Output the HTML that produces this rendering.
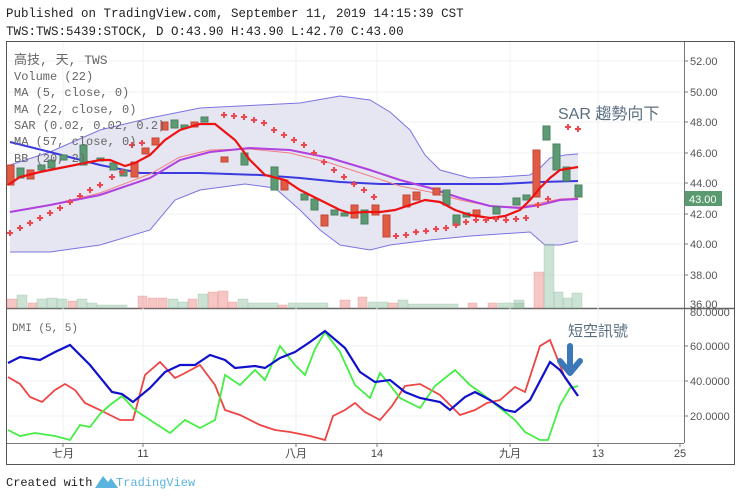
<!DOCTYPE html><html><head><meta charset="utf-8"><style>
body{margin:0;background:#fff;width:740px;height:497px;overflow:hidden;font-family:"Liberation Mono","Noto Sans CJK TC",monospace}
svg{position:absolute;left:0;top:0}
</style></head><body>
<svg width="740" height="497" viewBox="0 0 740 497" xmlns="http://www.w3.org/2000/svg">
<defs><path id="c" d="M-3 0H3M0 -3V3" stroke="#f0474f" stroke-width="2"/></defs>
<text x="6" y="17" font-family="Liberation Mono" font-size="12.5" fill="#222">Published on TradingView.com, September 11, 2019 14:15:39 CST</text>
<text x="6" y="35" font-family="Liberation Mono" font-size="12.5" fill="#222">TWS:TWS:5439:STOCK, D O:43.90 H:43.90 L:42.70 C:43.00</text>
<!-- frame -->
<rect x="6.5" y="41.5" width="728" height="423" fill="none" stroke="#555"/>
<line x1="684.5" y1="42" x2="684.5" y2="443" stroke="#777"/>
<line x1="7" y1="308.5" x2="734" y2="308.5" stroke="#666" stroke-width="1.5"/>
<line x1="7" y1="443.5" x2="684" y2="443.5" stroke="#777"/>
<!-- grid -->
<g stroke="#eef0f4">
<line x1="7" y1="61" x2="684" y2="61"/><line x1="7" y1="92" x2="684" y2="92"/><line x1="7" y1="122" x2="684" y2="122"/><line x1="7" y1="153" x2="684" y2="153"/><line x1="7" y1="183" x2="684" y2="183"/><line x1="7" y1="214" x2="684" y2="214"/><line x1="7" y1="244" x2="684" y2="244"/><line x1="7" y1="275" x2="684" y2="275"/>
<line x1="7" y1="346" x2="684" y2="346"/><line x1="7" y1="381" x2="684" y2="381"/><line x1="7" y1="416" x2="684" y2="416"/>
<line x1="63" y1="42" x2="63" y2="443"/><line x1="143" y1="42" x2="143" y2="443"/><line x1="296" y1="42" x2="296" y2="443"/><line x1="377" y1="42" x2="377" y2="443"/><line x1="510" y1="42" x2="510" y2="443"/><line x1="598" y1="42" x2="598" y2="443"/>
</g>
<!-- price axis -->
<g font-family="Liberation Sans" font-size="11" fill="#555">
<text x="690" y="65">52.00</text><text x="690" y="96">50.00</text><text x="690" y="126">48.00</text><text x="690" y="157">46.00</text><text x="690" y="187">44.00</text><text x="690" y="218">42.00</text><text x="690" y="248">40.00</text><text x="690" y="279">38.00</text><text x="690" y="308">36.00</text>
<text x="690" y="316">80.0000</text><text x="690" y="350">60.0000</text><text x="690" y="385">40.0000</text><text x="690" y="420">20.0000</text>
</g>
<g stroke="#777"><line x1="684" y1="61" x2="688" y2="61"/><line x1="684" y1="92" x2="688" y2="92"/><line x1="684" y1="122" x2="688" y2="122"/><line x1="684" y1="153" x2="688" y2="153"/><line x1="684" y1="183" x2="688" y2="183"/><line x1="684" y1="214" x2="688" y2="214"/><line x1="684" y1="244" x2="688" y2="244"/><line x1="684" y1="275" x2="688" y2="275"/><line x1="684" y1="346" x2="688" y2="346"/><line x1="684" y1="381" x2="688" y2="381"/><line x1="684" y1="416" x2="688" y2="416"/></g>
<rect x="685" y="191" width="37" height="15" fill="#5a9a70"/><text x="689" y="203" font-family="Liberation Sans" font-size="11" fill="#fff">43.00</text>
<!-- BB -->
<path d="M10 165L50 152L100 130L150 118L200 108L260 105L300 103L340 96L370 100L390 112L410 130L425 155L440 170L470 178L500 177L530 175L540 168L550 158L565 155L578 154L578 241L560 245L545 245L530 232L470 236L430 240L390 245L370 250L340 245L320 230L300 210L275 188L245 184L200 190L175 200L150 230L100 245L50 252L10 252Z" fill="#e6e6f3" stroke="none"/>
<polyline fill="none" stroke="#7b74e0" stroke-width="1" points="10,165 50,152 100,130 150,118 200,108 260,105 300,103 340,96 370,100 390,112 410,130 425,155 440,170 470,178 500,177 530,175 540,168 550,158 565,155 578,154"/>
<polyline fill="none" stroke="#7b74e0" stroke-width="1" points="10,252 50,252 100,245 150,230 175,200 200,190 245,184 275,188 300,210 320,230 340,245 370,250 390,245 430,240 470,236 530,232 545,245 560,245 578,241"/>
<!-- volume -->
<g fill-opacity="0.45" stroke-opacity="0.6" stroke-width="0.5">
<g fill="#e8817c" stroke="#e8817c"><rect x="7" y="299" width="10" height="9"/><rect x="28" y="303" width="9" height="5"/><rect x="68" y="301" width="9" height="7"/><rect x="138" y="296" width="9" height="12"/><rect x="148" y="298" width="9" height="10"/><rect x="158" y="298" width="9" height="10"/><rect x="188" y="299" width="9" height="9"/><rect x="208" y="292" width="10" height="16"/><rect x="218" y="291" width="10" height="17"/><rect x="228" y="302" width="9" height="6"/><rect x="278" y="305" width="9" height="3"/><rect x="340" y="300" width="10" height="8"/><rect x="358" y="297" width="9" height="11"/><rect x="388" y="303" width="10" height="5"/><rect x="468" y="303" width="9" height="5"/><rect x="488" y="303" width="9" height="5"/><rect x="534" y="272" width="10" height="36"/></g>
<g fill="#8fbf9f" stroke="#8fbf9f"><rect x="17" y="295" width="10" height="13"/><rect x="37" y="299" width="10" height="9"/><rect x="47" y="298" width="10" height="10"/><rect x="57" y="299" width="10" height="9"/><rect x="77" y="299" width="10" height="9"/><rect x="87" y="303" width="10" height="5"/><rect x="97" y="305" width="30" height="3"/><rect x="168" y="299" width="10" height="9"/><rect x="178" y="302" width="10" height="6"/><rect x="198" y="294" width="10" height="14"/><rect x="238" y="299" width="10" height="9"/><rect x="248" y="303" width="30" height="5"/><rect x="288" y="303" width="40" height="5"/><rect x="368" y="302" width="20" height="6"/><rect x="398" y="300" width="10" height="8"/><rect x="408" y="304" width="50" height="4"/><rect x="498" y="303" width="26" height="5"/><rect x="514" y="300" width="10" height="8"/><rect x="544" y="244" width="10" height="64"/><rect x="554" y="292" width="9" height="16"/><rect x="563" y="298" width="9" height="10"/><rect x="572" y="293" width="10" height="15"/></g>
</g>
<!-- MAs -->
<polyline fill="none" stroke="#3a3ae0" stroke-width="2" points="10,142 50,152 100,165 140,173 200,173 260,175 300,178 340,182 380,184 420,184 460,184 500,184 540,182 578,181"/>
<polyline fill="none" stroke="#f08080" stroke-width="1" points="10,212 50,205 100,193 150,174 180,157 210,150 250,149 290,153 330,163 370,176 400,186 430,192 460,200 490,206 520,207 540,203 560,199 578,198"/>
<polyline fill="none" stroke="#b040e0" stroke-width="2" points="10,212 50,205 100,195 150,178 180,160 210,152 250,148 290,150 330,158 370,170 400,180 430,188 460,198 490,206 520,208 540,205 560,200 578,199"/>
<!-- candles -->
<g stroke-width="1">
<g fill="#e05a44" stroke="#c04a38"><rect x="7" y="165" width="7" height="20"/><rect x="27" y="170" width="7" height="9"/><rect x="131" y="162" width="7" height="15"/><rect x="142" y="148" width="7" height="6"/><rect x="152" y="138" width="7" height="7"/><rect x="161" y="122" width="7" height="8"/><rect x="191" y="122" width="7" height="5"/><rect x="221" y="157" width="7" height="5"/><rect x="281" y="180" width="7" height="10"/><rect x="321" y="215" width="7" height="11"/><rect x="351" y="205" width="7" height="13"/><rect x="372" y="205" width="7" height="10"/><rect x="383" y="215" width="7" height="22"/><rect x="403" y="195" width="7" height="12"/><rect x="413" y="192" width="7" height="8"/><rect x="433" y="188" width="7" height="7"/><rect x="473" y="210" width="7" height="5"/><rect x="533" y="150" width="7" height="47"/></g>
<g fill="#5c9a74" stroke="#4a8060"><rect x="17" y="168" width="7" height="10"/><rect x="38" y="165" width="7" height="5"/><rect x="48" y="160" width="7" height="8"/><rect x="60" y="155" width="7" height="5"/><rect x="80" y="145" width="7" height="20"/><rect x="97" y="158" width="7" height="3"/><rect x="110" y="163" width="7" height="7"/><rect x="120" y="170" width="7" height="6"/><rect x="171" y="120" width="7" height="8"/><rect x="181" y="125" width="7" height="3"/><rect x="201" y="117" width="7" height="5"/><rect x="241" y="153" width="7" height="12"/><rect x="271" y="167" width="7" height="23"/><rect x="301" y="194" width="7" height="6"/><rect x="311" y="199" width="7" height="11"/><rect x="331" y="210" width="7" height="5"/><rect x="341" y="213" width="7" height="3"/><rect x="361" y="210" width="7" height="14"/><rect x="443" y="190" width="7" height="15"/><rect x="453" y="215" width="7" height="10"/><rect x="463" y="213" width="7" height="4"/><rect x="493" y="207" width="7" height="7"/><rect x="513" y="198" width="7" height="7"/><rect x="523" y="195" width="7" height="5"/><rect x="543" y="126" width="7" height="14"/><rect x="553" y="144" width="7" height="26"/><rect x="563" y="167" width="7" height="14"/><rect x="575" y="185" width="7" height="12"/></g>
</g>
<polyline fill="none" stroke="#ee1111" stroke-width="2.2" points="8,185 20,177 40,172 60,168 80,164 100,160 110,160 125,166 135,163 150,155 165,140 180,130 200,124 215,124 235,140 250,160 265,175 285,180 300,190 320,200 340,210 350,213 365,212 380,212 395,210 410,205 425,200 440,202 455,210 470,215 490,218 505,216 520,210 530,200 540,188 550,178 560,170 578,167"/>
<!-- SAR -->
<g>
<use href="#c" x="10" y="233"/><use href="#c" x="20" y="228"/><use href="#c" x="30" y="223"/><use href="#c" x="40" y="218"/><use href="#c" x="50" y="213"/><use href="#c" x="60" y="208"/><use href="#c" x="70" y="202"/><use href="#c" x="80" y="196"/><use href="#c" x="90" y="190"/><use href="#c" x="100" y="185"/><use href="#c" x="112" y="177"/><use href="#c" x="122" y="172"/><use href="#c" x="132" y="145"/><use href="#c" x="142" y="143"/><use href="#c" x="224" y="115"/><use href="#c" x="234" y="116"/><use href="#c" x="244" y="117"/><use href="#c" x="254" y="120"/><use href="#c" x="264" y="123"/><use href="#c" x="274" y="130"/><use href="#c" x="284" y="135"/><use href="#c" x="294" y="140"/><use href="#c" x="304" y="145"/><use href="#c" x="314" y="153"/><use href="#c" x="324" y="162"/><use href="#c" x="334" y="170"/><use href="#c" x="344" y="177"/><use href="#c" x="354" y="184"/><use href="#c" x="364" y="190"/><use href="#c" x="374" y="197"/><use href="#c" x="396" y="236"/><use href="#c" x="406" y="235"/><use href="#c" x="416" y="232"/><use href="#c" x="426" y="231"/><use href="#c" x="436" y="229"/><use href="#c" x="446" y="228"/><use href="#c" x="456" y="225"/><use href="#c" x="466" y="222"/><use href="#c" x="476" y="220"/><use href="#c" x="486" y="220"/><use href="#c" x="496" y="219"/><use href="#c" x="506" y="220"/><use href="#c" x="516" y="219"/><use href="#c" x="526" y="218"/><use href="#c" x="538" y="205"/><use href="#c" x="548" y="199"/><use href="#c" x="568" y="127"/><use href="#c" x="578" y="129"/>
</g>
<!-- legend -->
<g font-family="Liberation Mono" font-size="12" fill="#666">
<text x="14" y="64" font-size="13" font-family="Liberation Mono,Noto Sans CJK TC">高技, 天, TWS</text>
<text x="14" y="80">Volume (22)</text><text x="14" y="96">MA (5, close, 0)</text><text x="14" y="113">MA (22, close, 0)</text><text x="14" y="129">SAR (0.02, 0.02, 0.2)</text><text x="14" y="145">MA (57, close, 0)</text><text x="14" y="162">BB (20, 2)</text>
<text x="12" y="331" font-size="11">DMI (5, 5)</text>
</g>
<text x="558" y="119" font-family="Liberation Sans,Noto Sans CJK TC" font-size="16" fill="#5a6e80">SAR 趨勢向下</text>
<text x="568" y="336" font-family="Noto Sans CJK TC,sans-serif" font-size="15" fill="#5a6e80">短空訊號</text>
<!-- DMI -->
<polyline fill="none" stroke="#ee4444" stroke-width="1.8" points="8,377 20,384 30,397 42,402 55,390 65,384 75,390 85,403 100,410 120,420 133,420 145,375 160,362 175,378 185,373 200,365 215,385 225,410 240,415 260,425 275,430 290,432 310,436 325,440 333,416 345,410 355,403 365,412 380,420 392,406 405,386 420,384 440,395 450,405 460,415 475,410 487,403 500,400 515,387 525,392 540,346 550,340 565,378 578,396"/>
<polyline fill="none" stroke="#44ee44" stroke-width="1.8" points="8,430 20,436 35,433 55,436 70,440 80,425 90,427 100,414 110,405 122,396 135,410 150,420 170,433 185,420 200,428 215,420 225,375 240,385 255,370 265,380 280,346 295,365 305,375 315,349 325,332 340,352 355,385 370,398 380,373 390,385 400,398 420,408 435,386 455,370 470,385 480,392 500,408 515,420 525,432 540,440 548,440 560,405 570,388 578,386"/>
<polyline fill="none" stroke="#1111cc" stroke-width="2.2" points="8,363 20,357 40,360 55,352 70,345 90,365 112,392 122,394 133,402 150,388 165,372 180,365 195,365 210,355 225,360 235,368 255,366 265,368 280,358 295,352 310,342 325,331 345,348 360,372 375,382 390,380 405,392 420,398 440,402 450,410 465,397 475,392 490,400 505,410 515,412 530,400 550,362 560,370 578,396"/>
<path d="M570 346V368M560 361L570 373L580 361" fill="none" stroke="#3a78b8" stroke-width="6" stroke-linecap="round" stroke-linejoin="round"/>
<!-- time axis -->
<g font-family="Liberation Sans,Noto Sans CJK TC" font-size="11" fill="#444" text-anchor="middle">
<text x="63" y="457">七月</text><text x="143" y="457">11</text><text x="296" y="457">八月</text><text x="377" y="457">14</text><text x="510" y="457">九月</text><text x="598" y="457">13</text><text x="680" y="457">25</text>
</g>
<g stroke="#777"><line x1="63" y1="443" x2="63" y2="447"/><line x1="143" y1="443" x2="143" y2="447"/><line x1="296" y1="443" x2="296" y2="447"/><line x1="377" y1="443" x2="377" y2="447"/><line x1="510" y1="443" x2="510" y2="447"/><line x1="598" y1="443" x2="598" y2="447"/><line x1="680" y1="443" x2="680" y2="447"/></g>
<!-- footer -->
<text x="6" y="486" font-family="Liberation Mono" font-size="12" fill="#222">Created with</text>
<path d="M95 488L103 476L108 482L111 478L118 488Z" fill="#5bb3e0"/>
<text x="116" y="486" font-family="Liberation Mono" font-size="12" fill="#5bb3e0">TradingView</text>
</svg>
</body></html>
